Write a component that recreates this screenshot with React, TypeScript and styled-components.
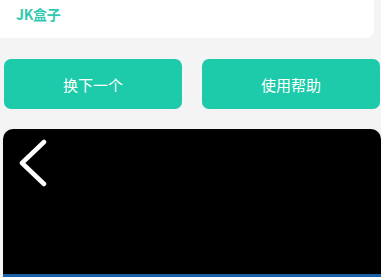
import React from "react";
import styled, { createGlobalStyle } from "styled-components";

const Global = createGlobalStyle`
  html, body { margin: 0; padding: 0; background: #f4f4f4; }
  body { font-family: "Noto Sans CJK SC", "Noto Sans", sans-serif; overflow: hidden; }
`;

const Page = styled.div`
  width: 381px;
  height: 277px;
  display: flex;
  flex-direction: column;
  background: #f4f4f4;
  overflow: hidden;
`;

const TopCard = styled.div`
  width: 374px;
  height: 38px;
  background: #ffffff;
  border-radius: 0 0 8px 0;
  padding: 5px 0 0 16px;
  box-sizing: border-box;
`;

const Brand = styled.div`
  color: #33c9ae;
  font-weight: 700;
  font-size: 14px;
  line-height: 18px;
  letter-spacing: -0.3px;
`;

const ButtonRow = styled.div`
  display: flex;
  gap: 20px;
  margin: 21px 0 0 4px;
`;

const ActionButton = styled.button`
  width: 178px;
  height: 50px;
  border: none;
  border-radius: 7px;
  background: #1dcaa9;
  color: #ffffff;
  font-family: "Noto Sans CJK SC", sans-serif;
  font-size: 15px;
  font-weight: 400;
  display: flex;
  align-items: center;
  justify-content: center;
  padding: 0;
`;

const Player = styled.div`
  margin: 20px 0 0 3px;
  flex: 1;
  background: #000000;
  border-radius: 10px 10px 0 0;
  border-bottom: 3px solid #1a5ea6;
  padding: 10px 0 0 15px;
  box-sizing: border-box;
`;

export default function App() {
  return (
    <>
      <Global />
      <Page>
        <TopCard>
          <Brand>JK盒子</Brand>
        </TopCard>
        <ButtonRow>
          <ActionButton>换下一个</ActionButton>
          <ActionButton>使用帮助</ActionButton>
        </ButtonRow>
        <Player>
          <svg width="32" height="50" viewBox="0 0 32 50">
            <path d="M26 3 L4 24 L26 45" fill="none" stroke="#fff" strokeWidth="4.5" strokeLinecap="round" strokeLinejoin="round" />
          </svg>
        </Player>
      </Page>
    </>
  );
}
